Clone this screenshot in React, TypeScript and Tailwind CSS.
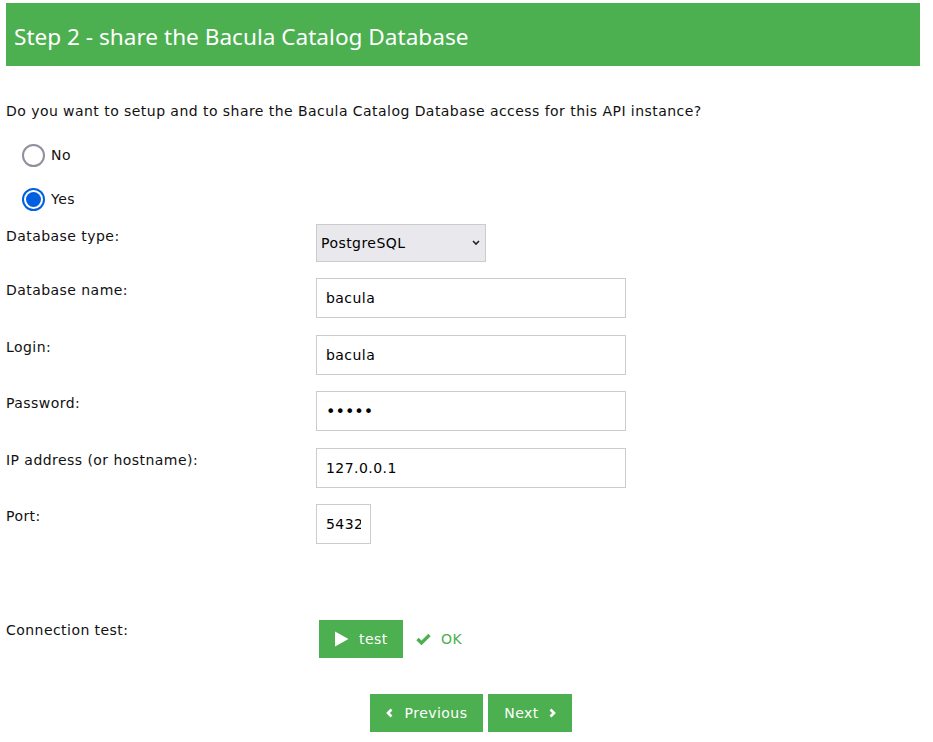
import React, { useState } from "react";

const body = "font-['DejaVu_Sans',Verdana,sans-serif] tracking-[0.45px]";

const Row = ({
  label,
  children,
  top = "mt-[16.5px]",
  pad = "pt-[2px]",
}: {
  label: string;
  children: React.ReactNode;
  top?: string;
  pad?: string;
}) => (
  <div className={`flex items-start ${top}`}>
    <label className={`w-[310px] ${pad} text-[14px] leading-[20px] text-[#111]`}>{label}</label>
    <div>{children}</div>
  </div>
);

const inputCls =
  "h-[40px] border border-[#cccccc] bg-white px-[9px] text-[14px] tracking-[0.45px] text-black outline-none font-['DejaVu_Sans',Verdana,sans-serif]";

export default function App() {
  const [share, setShare] = useState<"no" | "yes">("yes");

  const Radio = ({ value, label }: { value: "no" | "yes"; label: string }) => (
    <button
      type="button"
      onClick={() => setShare(value)}
      className="flex items-center gap-[6px] text-[14px] tracking-[0.45px] text-[#111]"
    >
      {share === value ? (
        <span className="flex h-[23px] w-[23px] items-center justify-center rounded-full border-2 border-[#0060df] bg-white">
          <span className="h-[15px] w-[15px] rounded-full bg-[#0060df]" />
        </span>
      ) : (
        <span className="h-[23px] w-[23px] rounded-full border-2 border-[#8f8f9d] bg-white" />
      )}
      {label}
    </button>
  );

  return (
    <div className={`${body} min-h-[742px] bg-white pl-[6px] pr-[13px] pt-[3px]`}>
      <div className="flex h-[63px] w-[914px] items-center bg-[#4caf50] px-[8px] pt-[4px]">
        <h1 className="font-['Noto_Sans',sans-serif] text-[22.6px] tracking-normal text-white">
          Step 2 - share the Bacula Catalog Database
        </h1>
      </div>

      <p className="mt-[35px] text-[14px] leading-[20px] text-[#111]">
        Do you want to setup and to share the Bacula Catalog Database access for this API instance?
      </p>

      <div className="mt-[23px] flex flex-col gap-[21px] pl-[16px]">
        <Radio value="no" label="No" />
        <Radio value="yes" label="Yes" />
      </div>

      <Row label="Database type:" top="mt-[13px]">
        <div className="relative w-[170px]">
          <select
            defaultValue="pgsql"
            className="h-[38px] w-full appearance-none border border-[#cccccc] bg-[#e9e9ed] pl-[4px] text-[14px] tracking-[0.45px] text-black outline-none"
          >
            <option value="pgsql">PostgreSQL</option>
            <option value="mysql">MySQL</option>
          </select>
          <svg className="pointer-events-none absolute right-[5px] top-[15px]" width="10" height="8" viewBox="0 0 10 8">
            <polyline points="2,2 5,5 8,2" fill="none" stroke="#222" strokeWidth="1.6" />
          </svg>
        </div>
      </Row>

      <Row label="Database name:" top="mt-[16px]">
        <input className={`${inputCls} w-[310px]`} defaultValue="bacula" />
      </Row>
      <Row label="Login:">
        <input className={`${inputCls} w-[310px]`} defaultValue="bacula" />
      </Row>
      <Row label="Password:">
        <input type="password" className={`${inputCls} w-[310px] text-[16px] tracking-[0px]`} defaultValue="bacul" />
      </Row>
      <Row label="IP address (or hostname):">
        <input className={`${inputCls} w-[310px]`} defaultValue="127.0.0.1" />
      </Row>
      <Row label="Port:">
        <input className={`${inputCls} w-[55px] px-[9px]`} defaultValue="5432" />
      </Row>

      <Row label="Connection test:" top="mt-[76px]" pad="pt-0">
        <div className="flex items-center pl-[3px]">
          <button className="flex h-[38px] w-[84px] items-center gap-[10px] bg-[#4caf50] pl-[15px] text-[14px] tracking-[0.45px] text-white">
            <svg width="15" height="16" viewBox="0 0 15 16">
              <path d="M1 0.5 L14.5 8 L1 15.5 Z" fill="white" />
            </svg>
            test
          </button>
          <span className="ml-[13px] flex items-center gap-[10px] text-[14px] text-[#4caf50]">
            <svg width="15" height="12" viewBox="0 0 15 12">
              <polyline points="1.5,6 5.5,10 13.5,2" fill="none" stroke="#4caf50" strokeWidth="3.2" />
            </svg>
            OK
          </span>
        </div>
      </Row>

      <div className="mt-[36px] flex w-[914px] justify-center gap-[5px] pl-[16px]">
        <button className="flex h-[38px] w-[113px] items-center justify-center gap-[12px] bg-[#4caf50] text-[14px] tracking-[0.45px] text-white">
          <svg width="7" height="10" viewBox="0 0 7 10">
            <polyline points="5.5,1.5 2,5 5.5,8.5" fill="none" stroke="white" strokeWidth="2.6" />
          </svg>
          Previous
        </button>
        <button className="flex h-[38px] w-[84px] items-center justify-center gap-[10px] bg-[#4caf50] text-[14px] tracking-[0.45px] text-white">
          Next
          <svg width="7" height="10" viewBox="0 0 7 10">
            <polyline points="1.5,1.5 5,5 1.5,8.5" fill="none" stroke="white" strokeWidth="2.6" />
          </svg>
        </button>
      </div>
    </div>
  );
}
